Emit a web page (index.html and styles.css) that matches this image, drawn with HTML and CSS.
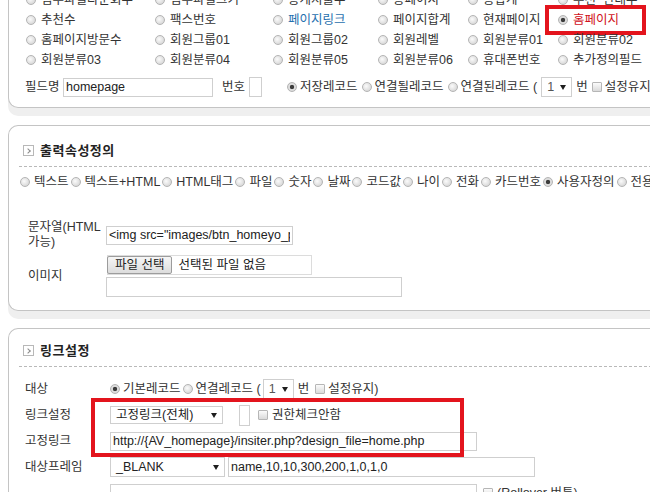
FILE: index.html
```html
<!DOCTYPE html>
<html lang="ko">
<head>
<meta charset="utf-8">
<title>필드 설정</title>
<link rel="stylesheet" href="styles.css">
</head>
<body>
<div class="page">

  <section class="panel p1">
    <div class="fgrid">
      <label class="opt"><input type="radio" name="f">첨부파일다운회수</label>
      <label class="opt"><input type="radio" name="f">첨부파일크기</label>
      <label class="opt"><input type="radio" name="f">총게시물수</label>
      <label class="opt"><input type="radio" name="f">총페이지</label>
      <label class="opt"><input type="radio" name="f">총합계</label>
      <label class="opt"><input type="radio" name="f">추천_반대수</label>

      <label class="opt"><input type="radio" name="f">추천수</label>
      <label class="opt"><input type="radio" name="f">팩스번호</label>
      <label class="opt blue"><input type="radio" name="f">페이지링크</label>
      <label class="opt"><input type="radio" name="f">페이지합계</label>
      <label class="opt"><input type="radio" name="f">현재페이지</label>
      <label class="opt red"><input type="radio" name="f" checked>홈페이지<span class="mark mark-home"></span></label>

      <label class="opt"><input type="radio" name="f">홈페이지방문수</label>
      <label class="opt"><input type="radio" name="f">회원그룹01</label>
      <label class="opt"><input type="radio" name="f">회원그룹02</label>
      <label class="opt"><input type="radio" name="f">회원레벨</label>
      <label class="opt"><input type="radio" name="f">회원분류01</label>
      <label class="opt"><input type="radio" name="f">회원분류02</label>

      <label class="opt"><input type="radio" name="f">회원분류03</label>
      <label class="opt"><input type="radio" name="f">회원분류04</label>
      <label class="opt"><input type="radio" name="f">회원분류05</label>
      <label class="opt"><input type="radio" name="f">회원분류06</label>
      <label class="opt"><input type="radio" name="f">휴대폰번호</label>
      <label class="opt"><input type="radio" name="f">추가정의필드</label>
    </div>

    <div class="frow">
      <span class="flabel">필드명</span>
      <input class="txt w150" type="text" value="homepage">
      <span class="nolabel">번호</span>
      <input class="txt sq" type="text" value="">
      <label class="opt ml-rec"><input type="radio" name="rec" checked>저장레코드</label>
      <label class="opt"><input type="radio" name="rec">연결될레코드</label>
      <label class="opt"><input type="radio" name="rec">연결된레코드 (</label>
      <span class="sel w31"><span>1</span><i class="arr"></i></span>
      <span>번</span>
      <label class="opt"><input type="checkbox">설정유지)</label>
    </div>
  </section>

  <section class="panel">
    <div class="phead"><span class="picon"></span><h2>출력속성정의</h2></div>
    <div class="types">
      <label class="opt"><input type="radio" name="t">텍스트</label>
      <label class="opt"><input type="radio" name="t">텍스트+HTML</label>
      <label class="opt"><input type="radio" name="t">HTML태그</label>
      <label class="opt"><input type="radio" name="t">파일</label>
      <label class="opt"><input type="radio" name="t">숫자</label>
      <label class="opt"><input type="radio" name="t">날짜</label>
      <label class="opt"><input type="radio" name="t">코드값</label>
      <label class="opt"><input type="radio" name="t">나이</label>
      <label class="opt"><input type="radio" name="t">전화</label>
      <label class="opt"><input type="radio" name="t">카드번호</label>
      <label class="opt"><input type="radio" name="t" checked>사용자정의</label>
      <label class="opt"><input type="radio" name="t">전용필드</label>
    </div>
    <div class="form f2">
      <div class="flbl">문자열(HTML<br>가능)</div>
      <div class="fval"><input class="txt w187" type="text" value='&lt;img src="images/btn_homeyo_pop.gif" border="0"&gt;'></div>
      <div class="flbl">이미지</div>
      <div class="fval col">
        <span class="file"><span class="fbtn">파일 선택</span><span class="fname">선택된 파일 없음</span></span>
        <input class="txt w296" type="text" value="">
      </div>
    </div>
  </section>

  <section class="panel p3">
    <div class="phead"><span class="picon"></span><h2>링크설정</h2></div>
    <div class="form f3">
      <div class="flbl">대상</div>
      <div class="fval compact">
        <label class="opt"><input type="radio" name="tg" checked>기본레코드</label>
        <label class="opt"><input type="radio" name="tg">연결레코드 (</label>
        <span class="sel w31"><span>1</span><i class="arr"></i></span>
        <span>번</span>
        <label class="opt"><input type="checkbox">설정유지)</label>
      </div>

      <div class="flbl">링크설정</div>
      <div class="fval">
        <span class="sel w113"><span>고정링크(전체)</span><i class="arr"></i></span>
        <input class="txt sq2" type="text" value="">
        <label class="opt ml4"><input type="checkbox">권한체크안함</label>
      </div>

      <div class="flbl">고정링크</div>
      <div class="fval"><input class="txt w367" type="text" value="http://{AV_homepage}/insiter.php?design_file=home.php"></div>

      <div class="flbl">대상프레임</div>
      <div class="fval tight">
        <span class="sel w115"><span>_BLANK</span><i class="arr"></i></span>
        <input class="txt w307" type="text" value="name,10,10,300,200,1,0,1,0">
      </div>

      <div class="flbl"></div>
      <div class="fval">
        <input class="txt w367" type="text" value="">
        <label class="opt ml2"><input type="checkbox">(Rollover 버튼)</label>
      </div>

      <span class="mark mark-link"></span>
    </div>
  </section>

</div>
</body>
</html>
```

FILE: styles.css
```css
* { box-sizing: border-box; }

html, body {
  margin: 0;
  padding: 0;
  background: #fff;
}

body {
  width: 650px;
  height: 492px;
  overflow: hidden;
  font-family: "Liberation Sans", "Noto Sans CJK KR", sans-serif;
  font-size: 12.5px;
  line-height: 15px;
  color: #333;
}

.page {
  width: 820px;
  padding-left: 8px;
}

/* panels */
.panel {
  position: relative;
  width: 812px;
  border: 1px solid #c4c4c4;
  border-right: 0;
  border-radius: 10px 0 0 10px;
  background: #fff;
  box-shadow: 0 8px 0 #efefef;
  margin-bottom: 17px;
}

.p1 {
  margin-top: -26px;
  padding: 15px 0 10px 17px;
}

/* options */
.opt {
  position: relative;
  display: inline-flex;
  align-items: center;
  gap: 4px;
  white-space: nowrap;
}

.blue { color: #1f6fae; }
.red { color: #d0121b; }

input[type="radio"] {
  -webkit-appearance: none;
  appearance: none;
  flex: none;
  margin: 0;
  width: 10px;
  height: 10px;
  border-radius: 50%;
  border: 1px solid #b4b4b4;
  background: radial-gradient(circle at 40% 40%, #fbfbfb 0, #e4e4e4 50%, #cdcdcd 100%);
}

input[type="radio"]:checked {
  background: radial-gradient(circle at 50% 50%, #3c3c3c 0, #3c3c3c 1.8px, #e2e2e2 2.6px, #cdcdcd 100%);
}

input[type="checkbox"] {
  -webkit-appearance: none;
  appearance: none;
  flex: none;
  margin: 0;
  width: 10px;
  height: 10px;
  border: 1px solid #b6b6b6;
  border-radius: 1px;
  background: linear-gradient(#fbfbfb, #dadada);
}

/* panel 1 grid */
.fgrid {
  display: grid;
  grid-template-columns: 129px 118px 105px 90px 90px 130px;
  grid-auto-rows: 20px;
}

.fgrid .opt { gap: 5px; }

.frow {
  display: flex;
  align-items: center;
  gap: 4px;
  height: 20px;
  margin-top: 7px;
  white-space: nowrap;
}

.frow .opt { gap: 3px; }

.flabel { width: 34px; margin-left: -1px; }
.nolabel { margin-left: 5px; }
.ml-rec { margin-left: 21px; }

/* text inputs */
.txt {
  font: inherit;
  color: #222;
  height: 19px;
  margin: 0;
  padding: 0 2px;
  border: 1px solid #cfcfcf;
  background: #fff;
  outline: none;
}

.w150 { width: 150px; }
.sq { width: 13px; height: 20px; }
.sq2 { width: 11px; height: 21px; margin-left: 12px; }
.w187 { width: 187px; }
.w296 { width: 296px; height: 20px; }
.w367 { width: 367px; }
.w307 { width: 307px; height: 20px; }

/* select look */
.sel {
  display: inline-flex;
  align-items: center;
  justify-content: space-between;
  height: 20px;
  padding: 0 5px 0 5px;
  border: 1px solid #cfcfcf;
  background: #fff;
  color: #222;
  flex: none;
}

.w31 { width: 31px; }
.w31 span { color: #555; }
.w113 { width: 113px; height: 18px; }
.w115 { width: 115px; }

.arr {
  width: 0;
  height: 0;
  border-left: 3px solid transparent;
  border-right: 3px solid transparent;
  border-top: 5px solid #1e1e1e;
}

/* panel header */
.phead {
  display: flex;
  align-items: center;
  gap: 6px;
  margin-left: 10px;
  padding: 16px 0 8px 4px;
  background: repeating-linear-gradient(90deg, #b9b9b9 0, #b9b9b9 3px, transparent 3px, transparent 5px) left bottom / 100% 1px no-repeat;
}

.p3 .phead { padding-top: 13px; }

.picon {
  position: relative;
  width: 11px;
  height: 11px;
  border: 1px solid #b8b8b8;
  background: #fff;
  flex: none;
}

.picon::after {
  content: "";
  position: absolute;
  left: 2px;
  top: 3px;
  width: 3px;
  height: 3px;
  border-top: 1px solid #8a8a8a;
  border-right: 1px solid #8a8a8a;
  transform: rotate(45deg);
}

.phead h2 {
  margin: 0;
  font-size: 13px;
  line-height: 17px;
  font-weight: bold;
  letter-spacing: 0.5px;
  color: #222;
}

/* output type radios */
.types {
  display: flex;
  align-items: center;
  height: 20px;
  margin: 5px 0 0 11px;
  gap: 2px;
  white-space: nowrap;
}

.types .opt { gap: 4px; }

/* two-column forms */
.form {
  display: grid;
  align-items: center;
}

.f2 {
  grid-template-columns: 78px 1fr;
  grid-template-rows: 30px 42px;
  row-gap: 5px;
  margin-top: 28px;
  padding: 0 0 13px 19px;
}

.f3 {
  position: relative;
  grid-template-columns: 85px 1fr;
  grid-auto-rows: 22px;
  row-gap: 4px;
  margin-top: 11px;
  padding-left: 16px;
}

.flbl {
  line-height: 15px;
  white-space: nowrap;
}

.fval {
  display: flex;
  align-items: center;
  gap: 4px;
  white-space: nowrap;
}

.fval.compact { gap: 2px; }
.fval.compact .opt { gap: 3px; }
.fval.compact .sel + span { margin: 0 4px 0 2px; }

.fval.col {
  flex-direction: column;
  align-items: flex-start;
  gap: 2px;
}

.fval.tight { gap: 3px; }

.ml4 { margin-left: 4px; }
.ml2 { margin-left: 2px; }

/* file input look */
.file {
  display: flex;
  align-items: center;
  gap: 6px;
  width: 205px;
  height: 20px;
  margin-left: 1px;
  border: 1px solid #dcdcdc;
}

.fbtn {
  display: inline-flex;
  align-items: center;
  height: 18px;
  padding: 0 7px;
  border: 1px solid #9c9c9c;
  border-radius: 2px;
  background: linear-gradient(#f6f6f6, #dcdcdc);
  color: #222;
  margin-left: -1px;
}

.fname { color: #222; }

/* red annotation boxes */
.mark {
  position: absolute;
  border: 4px solid #e3141d;
  pointer-events: none;
}

.mark-home {
  left: -13px;
  top: -5px;
  width: 101px;
  height: 30px;
}

.mark-link {
  left: 82px;
  top: 20px;
  width: 373px;
  height: 59px;
}
```
